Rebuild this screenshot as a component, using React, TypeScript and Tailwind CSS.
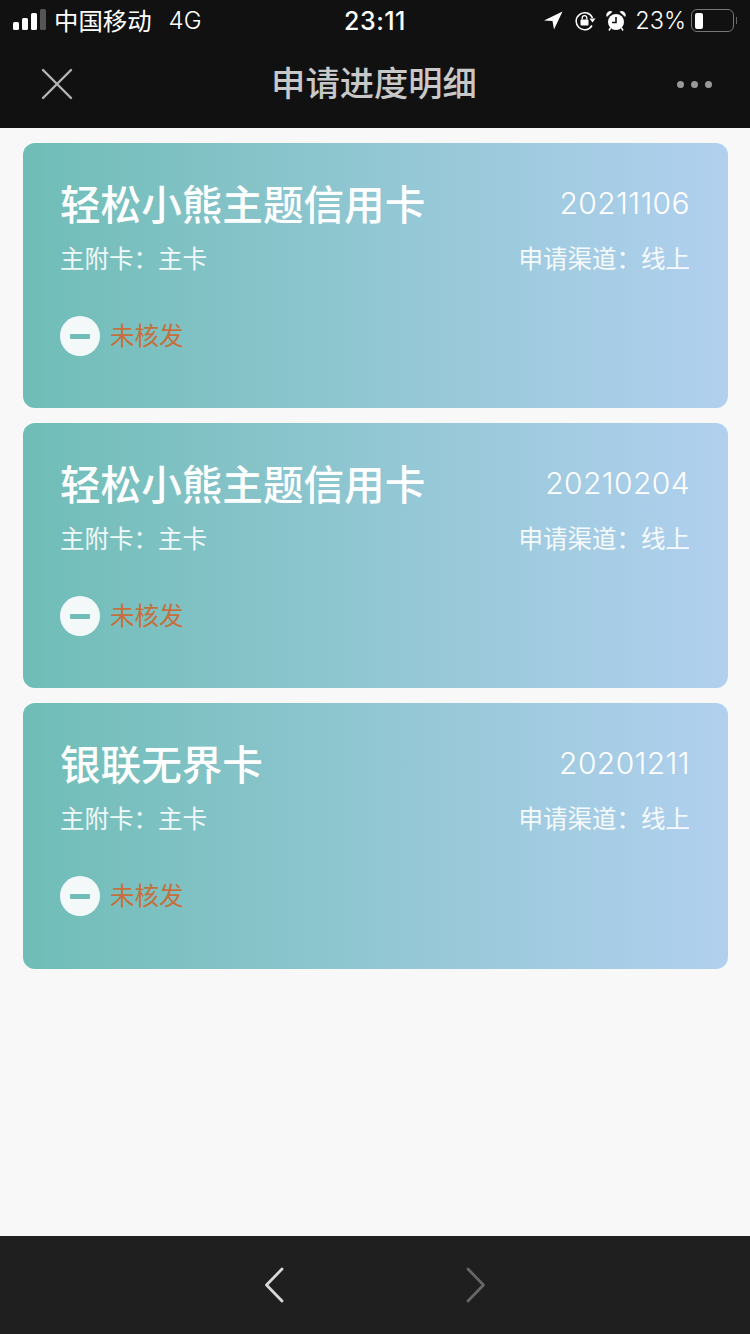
const font = "font-['Liberation_Sans','Noto_Sans_CJK_SC',sans-serif]"
const latin = "font-['Inter','Noto_Sans_CJK_SC',sans-serif]"

function SignalBars() {
  return (
    <div className="flex items-end gap-[3px] mt-[-2px]">
      <span className="w-[6px] h-[8px] rounded-[1.5px] bg-white" />
      <span className="w-[6px] h-[12px] rounded-[1.5px] bg-white" />
      <span className="w-[6px] h-[17px] rounded-[1.5px] bg-white" />
      <span className="w-[6px] h-[21px] rounded-[1.5px] bg-[#555]" />
    </div>
  )
}

function StatusBar() {
  return (
    <div className={`${latin} flex items-center h-[40px] pl-[13px] pr-[13px] text-white`}>
      <div className="flex-1 flex items-center">
        <SignalBars />
        <span className="ml-[8px] text-[24.4px] leading-none mt-[2px]">中国移动</span>
        <span className="ml-[17px] text-[24px] font-light leading-none mt-[2px]">4G</span>
      </div>
      <span className="text-[25px] leading-none font-medium tracking-[0.5px] mt-[2px]">23:11</span>
      <div className="flex-1 flex items-center justify-end mt-[1px]">
        <svg width="19" height="19" viewBox="0 0 19 19">
          <path d="M0 9.5 L18.5 0.5 L10 18.5 L8.5 10 Z" fill="#fff" />
        </svg>
        <svg className="ml-[12px]" width="21" height="20" viewBox="0 0 21 20" fill="none">
          <path d="M17 14.5 A8.5 8.5 0 1 1 17.5 7" stroke="#fff" strokeWidth="1.5" />
          <path d="M14.5 7.5 L20.5 7.5 L17.5 11.5 Z" fill="#fff" />
          <rect x="5.5" y="8.5" width="8" height="6" rx="1" fill="#fff" />
          <path d="M7.2 8.5 V7 a2.3 2.3 0 0 1 4.6 0 V8.5" stroke="#fff" strokeWidth="1.3" />
        </svg>
        <svg className="ml-[10px]" width="20" height="20" viewBox="0 0 20 20" fill="none">
          <circle cx="10" cy="11" r="8" fill="#fff" />
          <path d="M10 6 V11.5 H6" stroke="#111" strokeWidth="1.6" />
          <path d="M0.8 6 A4 4 0 0 1 6.5 0.8 Z M19.2 6 A4 4 0 0 0 13.5 0.8 Z" fill="#fff" />
          <path d="M4.5 17 L3 19.5 M15.5 17 L17 19.5" stroke="#fff" strokeWidth="1.5" />
        </svg>
        <span className="ml-[9px] text-[23.5px] font-light leading-none">23%</span>
        <div className="ml-[5px] flex items-center">
          <div className="w-[43px] h-[23px] rounded-[6px] border-[1.5px] border-[#777] p-[2.5px]">
            <div className="w-[8px] h-full rounded-[2px] bg-white" />
          </div>
          <span className="ml-[1.5px] w-[1.5px] h-[7px] bg-[#666]" />
        </div>
      </div>
    </div>
  )
}

function NavBar() {
  return (
    <div className="flex items-center justify-between h-[88px] pl-[41px] pr-[38px]">
      <svg width="32" height="32" viewBox="0 0 32 32" fill="none">
        <path d="M2 2 L30 30 M30 2 L2 30" stroke="#b4b4b4" strokeWidth="2.4" strokeLinecap="round" />
      </svg>
      <h1 className="text-[34.3px] font-medium leading-none text-[#c8c8c8] ml-[-2px]">申请进度明细</h1>
      <div className="flex gap-[7px]">
        <span className="w-[7px] h-[7px] rounded-full bg-[#999999]" />
        <span className="w-[7px] h-[7px] rounded-full bg-[#999999]" />
        <span className="w-[7px] h-[7px] rounded-full bg-[#999999]" />
      </div>
    </div>
  )
}

function ApplyCard({ title, date, tall }: { title: string; date: string; tall?: boolean }) {
  return (
    <div className={`${tall ? 'h-[266px]' : 'h-[265px]'} rounded-[12px] bg-gradient-to-r from-[#6fbdb7] to-[#b1d0ef] pl-[37px] pr-[38px] pt-[39px] text-white`}>
      <div className="flex items-center justify-between h-[48px]">
        <span className="text-[40.6px] font-medium leading-none">{title}</span>
        <span className={`${latin} text-[30px] font-[350] tracking-[0.4px] leading-none mb-[7px]`}>{date}</span>
      </div>
      <div className="flex items-center justify-between mt-[15px] h-[30px] text-[24.5px] leading-none text-white/90">
        <span>主附卡：主卡</span>
        <span>申请渠道：线上</span>
      </div>
      <div className="flex items-center mt-[41px]">
        <span className="flex items-center justify-center w-[40px] h-[40px] rounded-full bg-[#f3f9f9]">
          <span className="w-[20px] h-[5px] rounded-[1px] bg-[#6fbdb7]" />
        </span>
        <span className="ml-[10px] mt-[3px] text-[24.5px] leading-none text-[#c5703c]">未核发</span>
      </div>
    </div>
  )
}

export default function App() {
  return (
    <div className={`${font} w-[750px] h-[1334px] flex flex-col bg-[#f8f8f8]`}>
      <div className="bg-[#111111]">
        <StatusBar />
        <NavBar />
      </div>
      <div className="flex-1 flex flex-col gap-[15px] pt-[15px] pl-[23px] pr-[22px]">
        <ApplyCard title="轻松小熊主题信用卡" date="20211106" />
        <ApplyCard title="轻松小熊主题信用卡" date="20210204" />
        <ApplyCard title="银联无界卡" date="20201211" tall />
      </div>
      <div className="h-[98px] bg-[#1f1f1f] flex items-center">
        <svg className="ml-[263px]" width="22" height="38" viewBox="0 0 22 38" fill="none">
          <path d="M19 3 L3.5 19 L19 35" stroke="#d8d8d8" strokeWidth="2.8" strokeLinecap="round" strokeLinejoin="round" />
        </svg>
        <svg className="ml-[180px]" width="22" height="38" viewBox="0 0 22 38" fill="none">
          <path d="M3 3 L18.5 19 L3 35" stroke="#666666" strokeWidth="2.8" strokeLinecap="round" strokeLinejoin="round" />
        </svg>
      </div>
    </div>
  )
}
